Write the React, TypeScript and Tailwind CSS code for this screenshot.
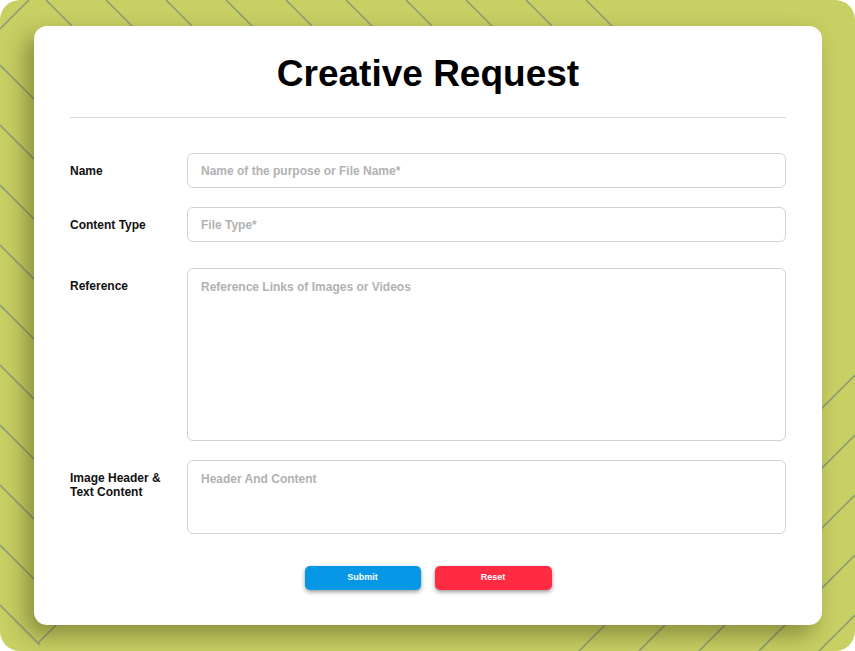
import React from "react";

const LINE = "#8f9c78";

function Pattern() {
  const top = Array.from({ length: 10 }, (_, k) => 46 + 60 * k);
  const left = Array.from({ length: 10 }, (_, k) => 65 + 60 * k);
  const br = [1230, 1290, 1350, 1410, 1470];
  return (
    <svg
      className="absolute inset-0"
      width="855"
      height="651"
      viewBox="0 0 855 651"
      fill="none"
    >
      {top.map((c) => (
        <line key={"t" + c} x1={c} y1={0} x2={c + 30} y2={30} stroke={LINE} strokeWidth="1.6" />
      ))}
      {left.map((c) => (
        <line key={"l" + c} x1={0} y1={c} x2={40} y2={c + 40} stroke={LINE} strokeWidth="1.6" />
      ))}
      <line x1={0} y1={29} x2={29} y2={0} stroke={LINE} strokeWidth="1.6" />
      <line x1={38} y1={643} x2={56} y2={625} stroke={LINE} strokeWidth="1.6" />
      {br.map((c) => (
        <line key={"b" + c} x1={c - 651} y1={651} x2={855} y2={c - 855} stroke={LINE} strokeWidth="1.6" />
      ))}
    </svg>
  );
}

export default function App() {
  const font = { fontFamily: '"Liberation Sans", Arial, sans-serif' };
  return (
    <div className="w-[855px] h-[651px] bg-white" style={font}>
      <div className="relative w-[855px] h-[651px] rounded-[20px] bg-[#c8cf63] overflow-hidden pt-[26px] pl-[34px] pr-[33px] pb-[26px]">
        <Pattern />
        <div className="relative z-10 h-full bg-white rounded-[13px] shadow-[-8px_10px_22px_rgba(40,45,0,0.4)] px-[36px] pt-[27px]">
          <h1 className="text-center text-[37px] leading-[42px] font-bold text-black">
            Creative Request
          </h1>
          <div className="mt-[22px] h-px bg-[#d9d9d9]" />

          <div className="mt-[35px] flex items-center">
            <label className="w-[117px] text-[12px] leading-[14px] font-bold text-[#111]">Name</label>
            <input
              className="flex-1 h-[35px] rounded-[6px] border border-[#d3d3d3] px-[13px] text-[12px] font-bold outline-none placeholder:text-[#b2b2b2]"
              placeholder="Name of the purpose or File Name*"
            />
          </div>

          <div className="mt-[19px] flex items-center">
            <label className="w-[117px] text-[12px] leading-[14px] font-bold text-[#111]">Content Type</label>
            <input
              className="flex-1 h-[35px] rounded-[6px] border border-[#d3d3d3] px-[13px] text-[12px] font-bold outline-none placeholder:text-[#b2b2b2]"
              placeholder="File Type*"
            />
          </div>

          <div className="mt-[26px] flex items-start">
            <label className="w-[117px] pt-[11px] text-[12px] leading-[14px] font-bold text-[#111]">Reference</label>
            <textarea
              className="flex-1 h-[173px] resize-none rounded-[6px] border border-[#d3d3d3] px-[13px] pt-[11px] text-[12px] leading-[14px] font-bold outline-none placeholder:text-[#b2b2b2]"
              placeholder="Reference Links of Images or Videos"
            />
          </div>

          <div className="mt-[19px] flex items-start">
            <label className="w-[117px] pt-[11px] text-[12px] leading-[14px] font-bold text-[#111]">
              Image Header &amp;
              <br />
              Text Content
            </label>
            <textarea
              className="flex-1 h-[74px] resize-none rounded-[6px] border border-[#d3d3d3] px-[13px] pt-[11px] text-[12px] leading-[14px] font-bold outline-none placeholder:text-[#b2b2b2]"
              placeholder="Header And Content"
            />
          </div>

          <div className="mt-[32px] flex justify-center gap-[14px]">
            <button className="w-[116px] h-[24px] rounded-[5px] bg-[#0596e5] text-white text-[9px] font-bold shadow-[0_2px_4px_rgba(0,0,0,0.4)]">
              Submit
            </button>
            <button className="w-[117px] h-[24px] rounded-[5px] bg-[#ff2b43] text-white text-[9px] font-bold shadow-[0_2px_4px_rgba(0,0,0,0.4)]">
              Reset
            </button>
          </div>
        </div>
      </div>
    </div>
  );
}
